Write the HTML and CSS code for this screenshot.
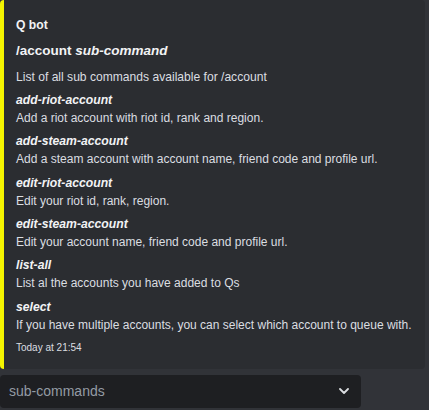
FILE: index.html
```html
<!DOCTYPE html>
<html>
<head>
<meta charset="utf-8">
<link rel="stylesheet" href="styles.css">
</head>
<body>
<div class="page">
  <div class="embed">
    <div class="author">Q bot</div>
    <div class="title">/account <em>sub-command</em></div>
    <div class="desc">List of all sub commands available for /account</div>
    <div class="fields">
      <div class="field"><div class="fname">add-riot-account</div><div class="fvalue">Add a riot account with riot id, rank and region.</div></div>
      <div class="field"><div class="fname">add-steam-account</div><div class="fvalue">Add a steam account with account name, friend code and profile url.</div></div>
      <div class="field"><div class="fname">edit-riot-account</div><div class="fvalue">Edit your riot id, rank, region.</div></div>
      <div class="field"><div class="fname">edit-steam-account</div><div class="fvalue">Edit your account name, friend code and profile url.</div></div>
      <div class="field"><div class="fname">list-all</div><div class="fvalue">List al the accounts you have added to Qs</div></div>
      <div class="field"><div class="fname">select</div><div class="fvalue">If you have multiple accounts, you can select which account to queue with.</div></div>
    </div>
    <div class="footer">Today at 21:54</div>
  </div>
  <div class="select">
    <span class="placeholder">sub-commands</span>
    <svg class="chevron" width="10" height="6" viewBox="0 0 10 6"><polyline points="1,1 5,5 9,1" fill="none" stroke="#dbdee1" stroke-width="1.8" stroke-linecap="round" stroke-linejoin="round"/></svg>
  </div>
</div>
</body>
</html>
```
FILE: styles.css
```css
body {
  margin: 0;
  background: #313338;
  font-family: "Liberation Sans", Arial, sans-serif;
}
.page {
  display: flex;
  flex-direction: column;
  align-items: flex-start;
  gap: 6px;
}
.embed {
  box-sizing: border-box;
  width: 425px;
  background: #2b2d31;
  border-left: 4px solid #f4f400;
  border-radius: 4px;
  padding: 16.8px 6px 12.5px 12px;
}
.author {
  font-size: 12.2px;
  line-height: 16px;
  font-weight: 700;
  color: #f2f3f5;
}
.title {
  margin-top: 9.5px;
  font-size: 13.5px;
  line-height: 18px;
  font-weight: 700;
  color: #f2f3f5;
}
.title em {
  font-style: italic;
}
.desc {
  margin-top: 8px;
  font-size: 12.1px;
  line-height: 18px;
  color: #dbdee1;
}
.fields {
  margin-top: 4.5px;
  display: flex;
  flex-direction: column;
  gap: 5.4px;
}
.fname {
  font-size: 12.2px;
  line-height: 18px;
  font-weight: 700;
  font-style: italic;
  color: #f2f3f5;
}
.fvalue {
  font-size: 12px;
  line-height: 18px;
  color: #dbdee1;
  white-space: nowrap;
}
.footer {
  margin-top: 6.7px;
  font-size: 10px;
  line-height: 16px;
  color: #dbdee1;
}
.select {
  box-sizing: border-box;
  width: 361px;
  height: 33px;
  background: #1e1f22;
  border-radius: 4px;
  display: flex;
  align-items: center;
  justify-content: space-between;
  padding: 0 12px 0 9px;
  font-size: 14px;
  color: #949ba4;
}
.chevron {
  display: block;
}
```
